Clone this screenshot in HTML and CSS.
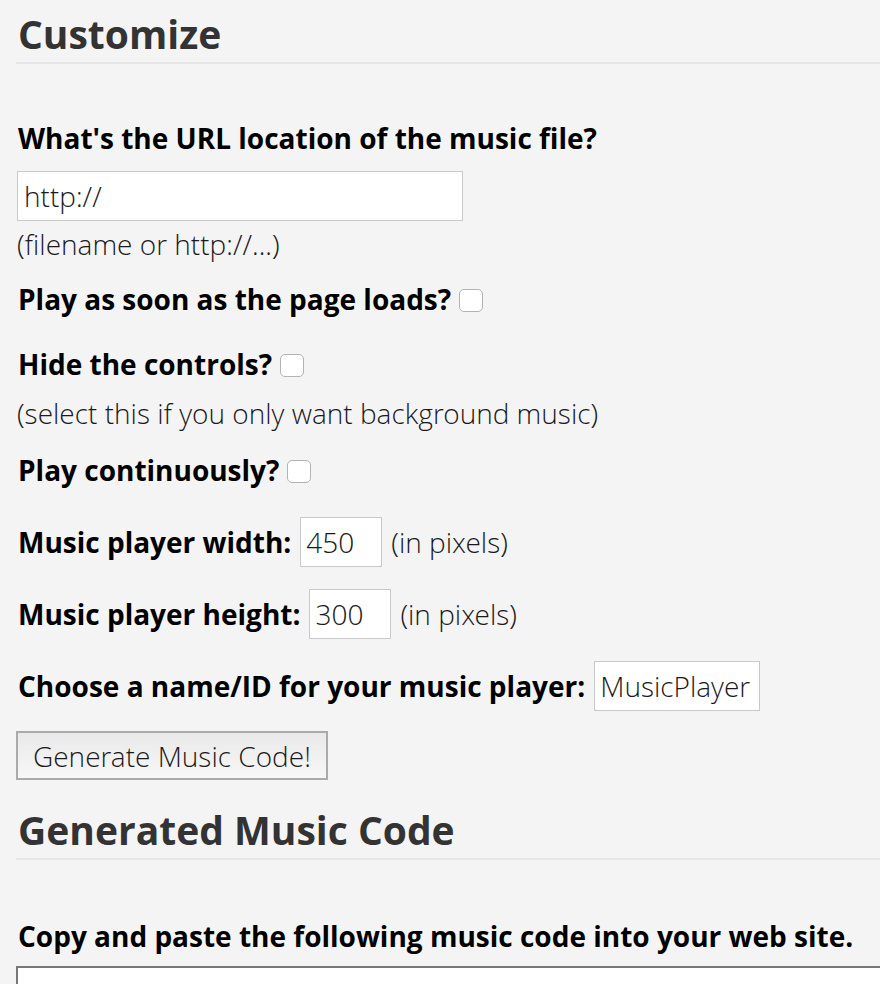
FILE: index.html
```html
<!DOCTYPE html>
<html>
<head>
<meta charset="utf-8">
<link rel="stylesheet" href="styles.css">
</head>
<body>
<div class="page">
  <h2 class="section-title">Customize</h2>
  <form class="form">
    <label class="label block-label" for="url">What's the URL location of the music file?</label>
    <input class="text-input url-input" id="url" type="text" value="http://">
    <div class="hint hint-url">(filename or http://...)</div>

    <div class="row row-autoplay">
      <label class="label" for="autoplay">Play as soon as the page loads?</label>
      <input class="check" id="autoplay" type="checkbox">
    </div>

    <div class="row row-hide">
      <label class="label" for="hide">Hide the controls?</label>
      <input class="check" id="hide" type="checkbox">
    </div>
    <div class="hint hint-hide">(select this if you only want background music)</div>

    <div class="row row-loop">
      <label class="label" for="loop">Play continuously?</label>
      <input class="check" id="loop" type="checkbox">
    </div>

    <div class="row row-input row-width">
      <label class="label" for="w">Music player width:</label>
      <input class="text-input small-input" id="w" type="text" value="450">
      <span class="unit">(in pixels)</span>
    </div>

    <div class="row row-input">
      <label class="label" for="h">Music player height:</label>
      <input class="text-input small-input" id="h" type="text" value="300">
      <span class="unit">(in pixels)</span>
    </div>

    <div class="row row-input">
      <label class="label" for="id">Choose a name/ID for your music player:</label>
      <input class="text-input name-input" id="id" type="text" value="MusicPlayer">
    </div>

    <button class="btn" type="button">Generate Music Code!</button>
  </form>

  <h2 class="section-title">Generated Music Code</h2>
  <div class="code-block">
    <label class="label block-label code-label" for="code">Copy and paste the following music code into your web site.</label>
    <textarea class="code-area" id="code"></textarea>
  </div>
</div>
</body>
</html>
```

FILE: styles.css
```css
html, body {
  margin: 0;
  padding: 0;
  background: #f4f4f4;
}
body {
  font-family: "Open Sans Light", "Open Sans", "Liberation Sans", sans-serif;
  font-weight: 300;
  font-size: 28px;
  color: #1a1a1a;
}
.page {
  padding: 0 0 0 16px;
}
.section-title {
  margin: 0;
  font-family: "Open Sans", "Liberation Sans", sans-serif;
  font-size: 39px;
  font-weight: 700;
  color: #333;
  line-height: 56px;
  padding: 6px 0 0 2px;
  border-bottom: 2px solid #e6e6e6;
}
.form {
  padding-top: 55px;
  display: flex;
  flex-direction: column;
  align-items: flex-start;
}
.label {
  font-family: "Open Sans", "Liberation Sans", sans-serif;
  font-weight: 700;
  color: #000;
  font-size: 28px;
  line-height: 38px;
  padding-left: 2px;
}
.block-label {
  display: block;
}
.text-input {
  font-family: inherit;
  font-weight: 300;
  font-size: 28px;
  color: #1a1a1a;
  background: #fff;
  border: 1px solid #c9c9c9;
  height: 50px;
  box-sizing: border-box;
  padding: 0 5px;
  margin: 0;
  outline: none;
}
.url-input {
  width: 446px;
  margin: 14px 0 0 1px;
  padding-left: 6px;
}
.small-input {
  width: 82px;
}
.name-input {
  width: 166px;
}
.hint {
  line-height: 38px;
  padding-left: 1px;
}
.hint-url {
  margin-top: 4px;
}
.row {
  display: flex;
  align-items: center;
  gap: 8px;
}
.row-autoplay {
  margin-top: 17px;
}
.row-hide {
  margin-top: 27px;
}
.hint-hide {
  margin-top: 11px;
}
.row-loop {
  margin-top: 19px;
}
.row-input {
  gap: 9px;
  margin-top: 22px;
}
.row-width {
  margin-top: 28px;
}
.check {
  appearance: none;
  -webkit-appearance: none;
  width: 24px;
  height: 23px;
  border: 1px solid #b3b3b3;
  border-radius: 5px;
  background: #fff;
  margin: 2px 0 0 0;
  box-sizing: border-box;
}
.btn {
  font-family: inherit;
  font-weight: 300;
  font-size: 28px;
  color: #1a1a1a;
  height: 49px;
  padding: 0 15px;
  border: 2px solid #aaa;
  background: linear-gradient(#e9e9e9, #f7f7f7);
  margin: 20px 0 16px 0;
}
.code-block {
  padding-top: 57px;
}
.code-label {
  margin-bottom: 11px;
}
.code-area {
  display: block;
  width: 900px;
  height: 200px;
  border: 2px solid #777;
  background: #fff;
  box-sizing: border-box;
  margin: 0;
}
```
